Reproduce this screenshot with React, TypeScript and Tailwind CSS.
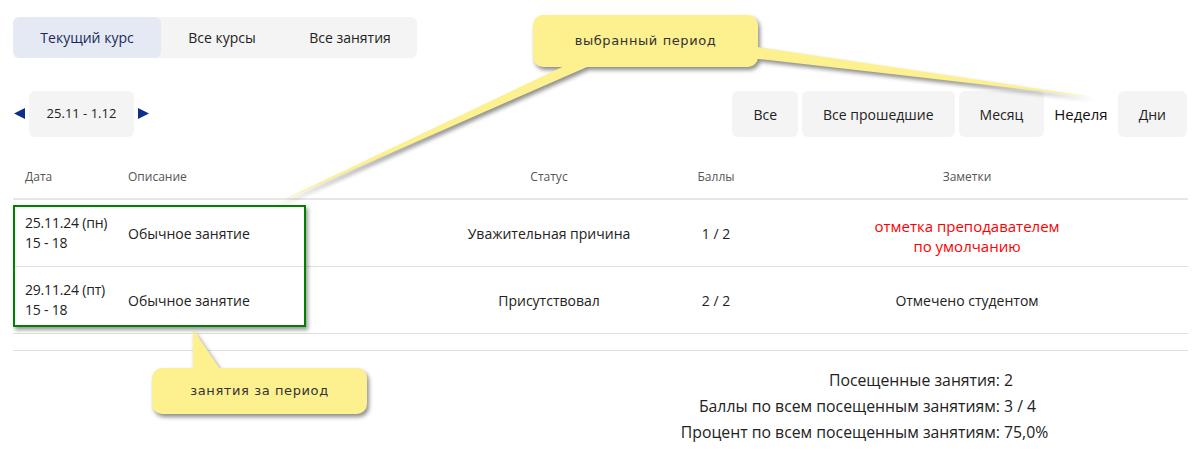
import React from "react";

const tabs = [
  { label: "Текущий курс", w: "w-[148px]", active: true },
  { label: "Все курсы", w: "w-[122px]", active: false },
  { label: "Все занятия", w: "w-[134px]", active: false },
];

const rows = [
  {
    date: "25.11.24 (пн)",
    time: "15 - 18",
    desc: "Обычное занятие",
    status: "Уважительная причина",
    score: "1 / 2",
    note: ["отметка преподавателем", "по умолчанию"],
    red: true,
  },
  {
    date: "29.11.24 (пт)",
    time: "15 - 18",
    desc: "Обычное занятие",
    status: "Присутствовал",
    score: "2 / 2",
    note: ["Отмечено студентом"],
    red: false,
  },
];

const cols = "grid grid-cols-[103px_334px_198px_136px_366px_1fr]";

function Callouts() {
  return (
    <>
      <svg
        className="pointer-events-none absolute left-0 top-0 drop-shadow-[2px_3px_2px_rgba(0,0,0,0.45)]"
        width="1200"
        height="454"
        viewBox="0 0 1200 454"
      >
        <g fill="#fdf08e">
          <polygon points="577,60 603,60 272,205" />
          <polygon points="750,46 750,58 1093,97" />
          <rect x="533" y="15" width="225" height="52" rx="10" />
          <polygon points="193,332 195,332 222,372 193,372" />
          <rect x="152" y="368" width="215" height="46" rx="10" />
        </g>
      </svg>
      <div className="pointer-events-none absolute left-[533px] top-[15px] flex h-[52px] w-[225px] items-center justify-center font-['DejaVu_Sans',sans-serif] text-[13px] tracking-[0.6px] text-[#333]">
        выбранный период
      </div>
      <div className="pointer-events-none absolute left-[152px] top-[368px] flex h-[46px] w-[215px] items-center justify-center font-['DejaVu_Sans',sans-serif] text-[13px] tracking-[0.6px] text-[#333]">
        занятия за период
      </div>
      <div className="pointer-events-none absolute left-[13px] top-[205px] h-[122px] w-[293px] border-2 border-[#008000] shadow-[2px_3px_4px_rgba(0,0,0,0.4)]" />
    </>
  );
}

export default function App() {
  return (
    <div className="relative h-[454px] w-[1200px] overflow-hidden bg-white font-['Open_Sans',sans-serif] text-[#222]">
      <div className="px-[13px] pt-[17px]">
        <div className="flex h-[41px] w-[404px] overflow-hidden rounded-md bg-[#f4f4f4] text-[14px]">
          {tabs.map((t) => (
            <div
              key={t.label}
              className={`flex items-center justify-center ${t.w} ${
                t.active ? "rounded-md bg-[#e4e9f4] text-[#1b2b57]" : "text-[#222]"
              }`}
            >
              {t.label}
            </div>
          ))}
        </div>

        <div className="mt-[33px] flex h-[46px] items-center justify-between">
          <div className="flex items-center">
            <svg width="14" height="12" viewBox="0 0 14 12" className="mr-[2px]">
              <polygon points="12,0 12,11 1,5.5" fill="#0c2f8c" />
            </svg>
            <div className="flex h-[46px] w-[105px] items-center justify-center rounded-md bg-[#f4f4f4] text-[13px]">
              25.11 - 1.12
            </div>
            <svg width="14" height="12" viewBox="0 0 14 12" className="ml-[2px]">
              <polygon points="2,0 2,11 13,5.5" fill="#0c2f8c" />
            </svg>
          </div>
          <div className="flex h-[46px] items-stretch gap-1 text-[14px]">
            <div className="flex items-center rounded-md bg-[#f4f4f4] px-[21px]">Все</div>
            <div className="flex items-center rounded-md bg-[#f4f4f4] px-[21px]">Все прошедшие</div>
            <div className="flex items-center rounded-md bg-[#f4f4f4] px-[21px]">Месяц</div>
            <div className="flex items-center px-[6px] text-[15px] text-[#111]">Неделя</div>
            <div className="flex items-center rounded-md bg-[#f4f4f4] px-[21px]">Дни</div>
          </div>
        </div>

        <div className="mt-[18px] w-[1175px]">
          <div className={`${cols} h-[45px] items-center border-b-2 border-[#e6e6e6] text-[12px] text-[#555]`}>
            <div className="pl-3">Дата</div>
            <div className="pl-3">Описание</div>
            <div className="text-center">Статус</div>
            <div className="text-center">Баллы</div>
            <div className="text-center">Заметки</div>
            <div />
          </div>
          {rows.map((r) => (
            <div
              key={r.date}
              className={`${cols} h-[67px] items-center border-b border-[#e0e0e0] text-[14px]`}
            >
              <div className="pl-3 leading-[20px] tracking-[-0.2px]">
                <div>{r.date}</div>
                <div>{r.time}</div>
              </div>
              <div className="pl-3">{r.desc}</div>
              <div className="text-center">{r.status}</div>
              <div className="text-center">{r.score}</div>
              <div
                className={`text-center ${
                  r.red ? "mt-[6px] text-[15px] leading-[20px] text-[#ff0000]" : ""
                }`}
              >
                {r.note.map((n) => (
                  <div key={n}>{n}</div>
                ))}
              </div>
              <div />
            </div>
          ))}
          <div className="h-[17px] border-b border-[#e0e0e0]" />
        </div>

        <div className="mt-[16px] grid grid-cols-[987px_1fr] gap-x-[4px] text-[15.8px] leading-[26px]">
          <div className="text-right">Посещенные занятия:</div>
          <div>2</div>
          <div className="text-right">Баллы по всем посещенным занятиям:</div>
          <div>3 / 4</div>
          <div className="text-right">Процент по всем посещенным занятиям:</div>
          <div>75,0%</div>
        </div>
      </div>

      <Callouts />
    </div>
  );
}
